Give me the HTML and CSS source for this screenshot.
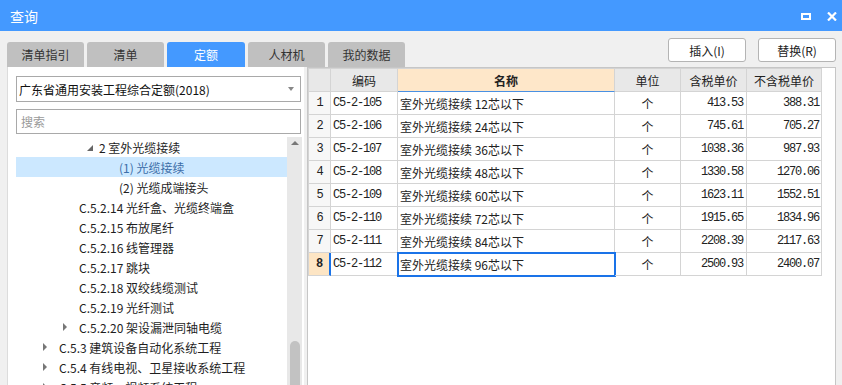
FILE: index.html
```html
<!DOCTYPE html>
<html lang="zh-CN">
<head>
    <meta charset="UTF-8">
    <title>查询</title>
    <link rel="stylesheet" href="styles.css">
</head>
<body>
    <div class="window">
        <div class="titlebar">
            <span class="title">查询</span>
            <div class="win-btns">
                <span class="btn-max"></span>
                <svg class="btn-close" width="10" height="9" viewBox="0 0 10 9">
                    <path d="M1 0.5 L9 8.5 M9 0.5 L1 8.5" stroke="#fff" stroke-width="2.2" fill="none"/>
                </svg>
            </div>
        </div>

        <div class="toolbar">
            <div class="tabs">
                <div class="tab">清单指引</div>
                <div class="tab">清单</div>
                <div class="tab active">定额</div>
                <div class="tab">人材机</div>
                <div class="tab">我的数据</div>
            </div>
            <div class="actions">
                <button class="btn">插入(I)</button>
                <button class="btn">替换(R)</button>
            </div>
        </div>

        <div class="main">
            <div class="side">
                <div class="select">
                    <span>广东省通用安装工程综合定额(2018)</span>
                    <span class="caret"></span>
                </div>
                <input class="search" placeholder="搜索">
                <div class="tree-wrap">
                    <ul class="tree">
                        <li class="node l3"><span class="tw open"></span>2 室外光缆接续</li>
                        <li class="node l4 selected"><span class="tw"></span>(1) 光缆接续</li>
                        <li class="node l4"><span class="tw"></span>(2) 光缆成端接头</li>
                        <li class="node l2"><span class="tw"></span>C.5.2.14 光纤盒、光缆终端盒</li>
                        <li class="node l2"><span class="tw"></span>C.5.2.15 布放尾纤</li>
                        <li class="node l2"><span class="tw"></span>C.5.2.16 线管理器</li>
                        <li class="node l2"><span class="tw"></span>C.5.2.17 跳块</li>
                        <li class="node l2"><span class="tw"></span>C.5.2.18 双绞线缆测试</li>
                        <li class="node l2"><span class="tw"></span>C.5.2.19 光纤测试</li>
                        <li class="node l2"><span class="tw closed"></span>C.5.2.20 架设漏泄同轴电缆</li>
                        <li class="node l1"><span class="tw closed"></span>C.5.3 建筑设备自动化系统工程</li>
                        <li class="node l1"><span class="tw closed"></span>C.5.4 有线电视、卫星接收系统工程</li>
                        <li class="node l1"><span class="tw closed"></span>C.5.5 音频、视频系统工程</li>
                    </ul>
                    <div class="scrollbar">
                        <span class="up"></span>
                        <span class="thumb"></span>
                    </div>
                </div>
            </div>

            <div class="grid-panel">
                <div class="grid">
                    <div class="cell hd"></div>
                    <div class="cell hd">编码</div>
                    <div class="cell hd name-hd">名称</div>
                    <div class="cell hd">单位</div>
                    <div class="cell hd">含税单价</div>
                    <div class="cell hd">不含税单价</div>

                    <div class="cell rn">1</div>
                    <div class="cell code">C5-2-105</div>
                    <div class="cell name">室外光缆接续 12芯以下</div>
                    <div class="cell unit">个</div>
                    <div class="cell num">413.53</div>
                    <div class="cell num last">388.31</div>

                    <div class="cell rn">2</div>
                    <div class="cell code">C5-2-106</div>
                    <div class="cell name">室外光缆接续 24芯以下</div>
                    <div class="cell unit">个</div>
                    <div class="cell num">745.61</div>
                    <div class="cell num last">705.27</div>

                    <div class="cell rn">3</div>
                    <div class="cell code">C5-2-107</div>
                    <div class="cell name">室外光缆接续 36芯以下</div>
                    <div class="cell unit">个</div>
                    <div class="cell num">1038.36</div>
                    <div class="cell num last">987.93</div>

                    <div class="cell rn">4</div>
                    <div class="cell code">C5-2-108</div>
                    <div class="cell name">室外光缆接续 48芯以下</div>
                    <div class="cell unit">个</div>
                    <div class="cell num">1330.58</div>
                    <div class="cell num last">1270.06</div>

                    <div class="cell rn">5</div>
                    <div class="cell code">C5-2-109</div>
                    <div class="cell name">室外光缆接续 60芯以下</div>
                    <div class="cell unit">个</div>
                    <div class="cell num">1623.11</div>
                    <div class="cell num last">1552.51</div>

                    <div class="cell rn">6</div>
                    <div class="cell code">C5-2-110</div>
                    <div class="cell name">室外光缆接续 72芯以下</div>
                    <div class="cell unit">个</div>
                    <div class="cell num">1915.65</div>
                    <div class="cell num last">1834.96</div>

                    <div class="cell rn">7</div>
                    <div class="cell code">C5-2-111</div>
                    <div class="cell name">室外光缆接续 84芯以下</div>
                    <div class="cell unit">个</div>
                    <div class="cell num">2208.39</div>
                    <div class="cell num last">2117.63</div>

                    <div class="cell rn current">8</div>
                    <div class="cell code">C5-2-112</div>
                    <div class="cell name focused">室外光缆接续 96芯以下</div>
                    <div class="cell unit">个</div>
                    <div class="cell num">2500.93</div>
                    <div class="cell num last">2400.07</div>
                </div>
            </div>
        </div>
    </div>
</body>
</html>
```

FILE: styles.css
```css
:root {
    --blue: #4499ff;
    --window-bg: #f0f0f0;
    --tab-grey: #c0c0c0;
    --line: #d4d4d4;
    --focus: #1a73e8;
}

* {
    box-sizing: border-box;
}

body {
    margin: 0;
    font-family: "Noto Sans CJK SC", "Noto Sans", sans-serif;
    font-size: 12px;
    color: #222;
    background: var(--window-bg);
    overflow: hidden;
}

.window {
    width: 842px;
    height: 385px;
    display: flex;
    flex-direction: column;
}

/* title bar */
.titlebar {
    height: 31px;
    flex-shrink: 0;
    background: var(--blue);
    color: #fff;
    display: flex;
    align-items: center;
    justify-content: space-between;
    padding: 0 5px 0 10px;
}

.title {
    font-size: 14px;
}

.win-btns {
    display: flex;
    align-items: center;
    gap: 16px;
    margin-top: 1px;
}

.btn-max {
    width: 10px;
    height: 7px;
    border: 2px solid #fff;
}

.btn-close {
    display: block;
}

/* tabs + buttons */
.toolbar {
    height: 36px;
    flex-shrink: 0;
    display: flex;
    justify-content: space-between;
    padding: 0 6px 0 7px;
}

.tabs {
    align-self: flex-end;
    display: flex;
    gap: 3px;
}

.tab {
    width: 77px;
    height: 25px;
    line-height: 25px;
    text-align: center;
    background: var(--tab-grey);
    color: #333;
    border-radius: 3px 3px 0 0;
}

.tab.active {
    width: 78px;
    background: var(--blue);
    color: #fff;
}

.actions {
    display: flex;
    gap: 12px;
    padding-top: 7px;
}

.btn {
    width: 78px;
    height: 24px;
    padding: 0;
    background: #fff;
    border: 1px solid #b4b4b4;
    border-radius: 3px;
    font-family: inherit;
    font-size: 12px;
    color: #222;
}

/* main area */
.main {
    flex: 1;
    min-height: 0;
    display: flex;
    gap: 3px;
    padding: 0 6px 0 7px;
}

.side {
    width: 297px;
    background: #fff;
    border-left: 1px solid #dcdcdc;
    padding: 9px 2px 0 8px;
    display: flex;
    flex-direction: column;
    overflow: hidden;
}

.select {
    height: 26px;
    margin-right: 1px;
    border: 1px solid #a9a9a9;
    display: flex;
    align-items: center;
    justify-content: space-between;
    padding: 0 6px 0 2px;
    color: #111;
}

.caret {
    border-top: 4px solid #888;
    border-left: 3px solid transparent;
    border-right: 3px solid transparent;
}

.search {
    margin: 7px 1px 0 0;
    height: 25px;
    border: 1px solid #a9a9a9;
    padding: 0 4px;
    font-family: inherit;
    font-size: 12px;
    outline: none;
}

.search::placeholder {
    color: #9a9a9a;
}

.tree-wrap {
    flex: 1;
    min-height: 0;
    margin-top: 3px;
    display: flex;
    overflow: hidden;
}

.tree {
    flex: 1;
    list-style: none;
    margin: 0;
    padding: 0;
}

.node {
    height: 20px;
    display: flex;
    align-items: center;
    white-space: nowrap;
    color: #1e1e1e;
}

.node.l1 { padding-left: 27px; }
.node.l2 { padding-left: 47px; }
.node.l3 { padding-left: 67px; }
.node.l4 { padding-left: 87px; }

.node.selected {
    background: #cce8ff;
    color: #3d6ea8;
}

.tw {
    width: 16px;
    flex-shrink: 0;
    height: 20px;
    position: relative;
}

.tw.closed::before {
    content: "";
    position: absolute;
    left: 0;
    top: 6px;
    border-left: 4px solid #777;
    border-top: 4px solid transparent;
    border-bottom: 4px solid transparent;
}

.tw.open::before {
    content: "";
    position: absolute;
    left: 4px;
    top: 8px;
    border-right: 6px solid #666;
    border-top: 6px solid transparent;
}

.scrollbar {
    width: 15px;
    flex-shrink: 0;
    background: #e8e8e8;
    display: flex;
    flex-direction: column;
    align-items: center;
}

.up {
    margin-top: 4px;
    border-bottom: 4px solid #777;
    border-left: 4px solid transparent;
    border-right: 4px solid transparent;
}

.thumb {
    margin-top: 196px;
    width: 10px;
    height: 80px;
    background: #c2c2c2;
    border-radius: 5px 5px 0 0;
}

/* data grid */
.grid-panel {
    flex: 1;
    background: #fff;
    border: 1px solid #c6c6c6;
    border-bottom: none;
}

.grid {
    display: grid;
    grid-template-columns: 22px 67px 217px 66px 66px 75px;
    grid-auto-rows: 23px;
    width: 514px;
    border-left: 1px solid var(--line);
    border-top: 1px solid var(--line);
}

.cell {
    border-right: 1px solid var(--line);
    border-bottom: 1px solid var(--line);
    display: flex;
    align-items: center;
    white-space: nowrap;
    overflow: hidden;
}

.hd {
    justify-content: center;
    background: #e8e8e8;
    color: #222;
}

.hd.name-hd {
    background: #fee7c9;
    font-weight: bold;
    border-bottom-color: #4a90e2;
}

.rn {
    justify-content: center;
    background: #f7f7f7;
    font-family: "Liberation Mono", monospace;
    letter-spacing: -1px;
}

.rn.current {
    background: #fde5c4;
    font-weight: bold;
    border-right: 2px solid var(--focus);
}

.code {
    padding-left: 2px;
    font-family: "Liberation Mono", monospace;
    letter-spacing: -1.2px;
}

.name {
    padding-left: 2px;
}

.name.focused {
    outline: 2px solid var(--focus);
    outline-offset: -1px;
}

.unit {
    justify-content: center;
}

.num {
    justify-content: flex-end;
    padding-right: 3px;
    font-family: "Liberation Mono", monospace;
    letter-spacing: -1.2px;
}

.num.last {
    padding-right: 2px;
}
```
